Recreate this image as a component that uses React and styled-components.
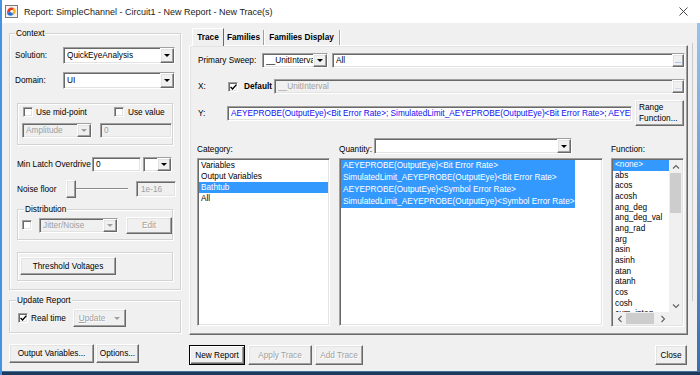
import React from "react";
import styled, { createGlobalStyle, css } from "styled-components";

const GlobalStyle = createGlobalStyle`
  html, body { margin: 0; padding: 0; background: #f0f0f0; }
  body {
    font-family: "Liberation Sans", Arial, sans-serif;
    font-size: 8.25px;
    color: #000;
  }
  * { box-sizing: border-box; }
`;

const sunken = css`
  border: 1px solid;
  border-color: #a0a0a0 #ffffff #ffffff #a0a0a0;
  box-shadow: inset 1px 1px 0 #696969, inset -1px -1px 0 #e3e3e3;
`;

const raised = css`
  border: 1px solid;
  border-color: #ffffff #696969 #696969 #ffffff;
  box-shadow: inset -1px -1px 0 #a0a0a0, inset 1px 1px 0 #e3e3e3;
`;

const Window = styled.div`
  width: 700px;
  height: 375px;
  overflow: hidden;
  display: flex;
  flex-direction: column;
  background: #f0f0f0;
  border-left: 2px solid #4393e2;
`;

const TitleBar = styled.div`
  flex: none;
  height: 23px;
  background: #fff;
  display: flex;
  align-items: center;
  padding-left: 3px;
`;

const Title = styled.span`
  margin-left: 6px;
  font-size: 9px;
  color: #1a1a1a;
  white-space: nowrap;
`;

const CloseIcon = styled.svg`
  margin-left: auto;
  margin-right: 12px;
`;

const Body = styled.div`
  flex: 1;
  display: flex;
  padding-left: 7px;
`;

const Edge = styled.div`
  flex: 1;
  display: flex;
  justify-content: space-between;
  padding-left: 4px;
`;

const EdgeLine = styled.div`
  width: 1px;
  margin: 20px 0 70px;
  background: #c8c8c8;
`;

const EdgeStrip = styled.div`
  width: 3px;
  background: linear-gradient(#9cc2ea, #3c6ea8);
`;

const Taskbar = styled.div`
  flex: none;
  height: 4px;
  background: #1d3a5c;
  border-top: 1px solid #46709c;
`;

const Col = styled.div`
  flex: none;
  display: flex;
  flex-direction: column;
  width: ${(p) => p.$w}px;
  margin-left: ${(p) => p.$ml || 0}px;
  padding-top: ${(p) => p.$pt || 0}px;
`;

const Group = styled.div`
  position: relative;
  flex: none;
  width: ${(p) => (p.$w ? p.$w + "px" : "auto")};
  margin-top: ${(p) => p.$mt || 0}px;
  margin-left: ${(p) => p.$ml || 0}px;
  padding: ${(p) => p.$pad || "0"};
  border: 1px solid #d3d3d3;
  box-shadow: inset 1px 1px 0 #fff, 1px 1px 0 #fff;
`;

const Legend = styled.span`
  position: absolute;
  top: -6px;
  left: ${(p) => p.$left || 5}px;
  padding: 0 1px;
  line-height: 11px;
  background: #f0f0f0;
  white-space: nowrap;
`;

const Row = styled.div`
  flex: none;
  display: flex;
  align-items: ${(p) => p.$align || "center"};
  height: ${(p) => p.$h}px;
  margin-top: ${(p) => p.$mt || 0}px;
  margin-left: ${(p) => p.$ml || 0}px;
  gap: ${(p) => p.$gap || 0}px;
`;

const Label = styled.span`
  flex: none;
  width: ${(p) => (p.$w ? p.$w + "px" : "auto")};
  margin-left: ${(p) => p.$ml || 0}px;
  white-space: nowrap;
  font-weight: ${(p) => (p.$bold ? 700 : 400)};
  color: ${(p) => (p.$disabled ? "#a0a0a0" : "#000")};
`;

const Field = styled.div`
  ${sunken};
  flex: none;
  display: flex;
  align-items: center;
  overflow: hidden;
  white-space: nowrap;
  width: ${(p) => p.$w}px;
  height: ${(p) => p.$h || 15}px;
  margin-left: ${(p) => p.$ml || 0}px;
  padding-left: ${(p) => p.$pl ?? 3}px;
  background: ${(p) => (p.$disabled ? "#f0f0f0" : "#fff")};
  color: ${(p) => (p.$disabled ? "#a0a0a0" : p.$color || "#000")};
`;

const FieldText = styled.span`
  flex: 1;
  min-width: 0;
  overflow: hidden;
`;

const DropBtn = styled.span`
  ${raised};
  flex: none;
  width: ${(p) => p.$w || 14}px;
  height: 100%;
  display: flex;
  align-items: center;
  justify-content: center;
  background: #f0f0f0;
  color: ${(p) => (p.$disabled ? "#a0a0a0" : "#3030c0")};
  font-size: 7px;
  line-height: 1;
`;

const Arrow = styled.span`
  width: 0;
  height: 0;
  border-left: 3px solid transparent;
  border-right: 3px solid transparent;
  border-top: 3px solid ${(p) => (p.$disabled ? "#a0a0a0" : "#000")};
`;

const CheckBox = styled.span`
  ${sunken};
  flex: none;
  width: 10px;
  height: 10px;
  background: #fff;
  display: flex;
  align-items: center;
  justify-content: center;
`;

const Button = styled.button`
  ${raised};
  flex: none;
  font: inherit;
  margin: 0;
  padding: 0;
  width: ${(p) => p.$w}px;
  height: ${(p) => p.$h || 19}px;
  margin-left: ${(p) => p.$ml || 0}px;
  margin-right: ${(p) => p.$mr || 0}px;
  background: #f0f0f0;
  color: ${(p) => (p.disabled ? "#a0a0a0" : "#000")};
  text-shadow: ${(p) => (p.disabled ? "1px 1px 0 #fff" : "none")};
  display: flex;
  align-items: center;
  justify-content: ${(p) => (p.$left ? "flex-start" : "center")};
  ${(p) =>
    p.$default &&
    css`
      border-color: #000;
      box-shadow: inset 1px 1px 0 #fff, inset -1px -1px 0 #696969,
        inset -2px -2px 0 #a0a0a0;
    `}
`;

const RangeText = styled.span`
  display: flex;
  flex-direction: column;
  align-items: flex-start;
  padding-left: 3px;
  line-height: 11px;
`;

const SplitArrow = styled.span`
  margin-left: 9px;
  width: 0;
  height: 0;
  border-left: 3px solid transparent;
  border-right: 3px solid transparent;
  border-top: 3px solid #a0a0a0;
`;

const Slider = styled.div`
  flex: none;
  width: 62px;
  height: 18px;
  display: flex;
  align-items: center;
`;

const Thumb = styled.span`
  ${raised};
  flex: none;
  width: 10px;
  height: 18px;
  background: #f0f0f0;
`;

const Track = styled.span`
  flex: 1;
  height: 2px;
  border-top: 1px solid #8a8a8a;
  border-bottom: 1px solid #fff;
`;

const Tabs = styled.div`
  flex: none;
  display: flex;
  align-items: flex-end;
  height: 17px;
  padding-left: 3px;
  margin-top: 5px;
  position: relative;
  z-index: 1;
`;

const Tab = styled.div`
  flex: none;
  width: ${(p) => p.$w}px;
  height: ${(p) => (p.$active ? 18 : 15)}px;
  display: flex;
  align-items: center;
  justify-content: center;
  font-weight: 700;
  white-space: nowrap;
  ${(p) =>
    p.$active
      ? css`
          border: 1px solid;
          border-color: #fff #696969 transparent #fff;
          border-bottom: none;
          background: #f0f0f0;
          margin-bottom: -1px;
        `
      : css`
          border-right: 1px solid #a0a0a0;
          box-shadow: 1px 0 0 #fff;
        `}
`;

const Panel = styled.div`
  ${raised};
  flex: none;
  height: 290px;
  padding: 7px 2px 0 8px;
  display: flex;
  flex-direction: column;
`;

const ListArea = styled.div`
  flex: none;
  display: flex;
  margin-top: 14px;
`;

const ListCol = styled.div`
  flex: none;
  display: flex;
  flex-direction: column;
  width: ${(p) => p.$w}px;
  margin-left: ${(p) => p.$ml || 0}px;
`;

const ListHead = styled.div`
  height: 15px;
  display: flex;
  align-items: flex-end;
  padding-bottom: 1px;
`;

const ListBox = styled.div`
  ${sunken};
  margin-top: 3px;
  background: #fff;
  height: ${(p) => p.$h}px;
  overflow: hidden;
  padding: 1px;
`;

const Item = styled.div`
  height: ${(p) => p.$rh}px;
  line-height: ${(p) => p.$rh}px;
  padding-left: ${(p) => p.$pl ?? 2}px;
  white-space: nowrap;
  width: ${(p) => (p.$hw ? p.$hw + "px" : "auto")};
  background: ${(p) => (p.$sel ? "#3399ff" : "transparent")};
  color: ${(p) => (p.$sel ? "#fff" : "#000")};
`;

const FnBox = styled.div`
  ${sunken};
  margin-top: 3px;
  background: #fff;
  height: 169px;
  overflow: hidden;
  display: grid;
  grid-template-columns: 1fr 13px;
  grid-template-rows: 1fr 13px;
  padding: 1px;
`;

const FnItems = styled.div`
  overflow: hidden;
`;

const VScroll = styled.div`
  background: #f0f0f0;
  display: flex;
  flex-direction: column;
  align-items: stretch;
`;

const HScroll = styled.div`
  background: #f0f0f0;
  display: flex;
  align-items: stretch;
`;

const Corner = styled.div`
  background: #f0f0f0;
`;

const ScrollBtn = styled.span`
  flex: none;
  display: flex;
  align-items: center;
  justify-content: center;
  width: ${(p) => (p.$h ? "13px" : "auto")};
  height: ${(p) => (p.$h ? "auto" : "13px")};
`;

const ScrollThumb = styled.span`
  flex: none;
  background: #cdcdcd;
  ${(p) =>
    p.$h
      ? css`
          width: 28px;
          margin: 1px 0;
        `
      : css`
          height: 40px;
          margin: 0 1px;
        `}
`;

const Spacer = styled.span`
  flex: 1;
`;

const BottomRow = styled.div`
  flex: none;
  display: flex;
  height: ${(p) => p.$h || 19}px;
  margin-top: ${(p) => p.$mt || 0}px;
  gap: ${(p) => p.$gap || 0}px;
`;

const Chevron = ({ dir }) => {
  const d = {
    up: "M1 4.5 L4 1.5 L7 4.5",
    down: "M1 1.5 L4 4.5 L7 1.5",
    left: "M4.5 1 L1.5 4 L4.5 7",
    right: "M1.5 1 L4.5 4 L1.5 7",
  }[dir];
  const vertical = dir === "up" || dir === "down";
  return (
    <svg
      width={vertical ? 8 : 6}
      height={vertical ? 6 : 8}
      viewBox={vertical ? "0 0 8 6" : "0 0 6 8"}
    >
      <path d={d} stroke="#606060" strokeWidth="1.1" fill="none" />
    </svg>
  );
};

const Tick = () => (
  <svg width="7" height="6" viewBox="0 0 7 6">
    <path d="M0.6 3 L2.6 5 L6.4 0.6" stroke="#000" strokeWidth="1.4" fill="none" />
  </svg>
);

const Combo = ({ w, h, disabled, children, ml }) => (
  <Field $w={w} $h={h} $disabled={disabled} $ml={ml}>
    <FieldText>{children}</FieldText>
    <DropBtn $disabled={disabled}>
      <Arrow $disabled={disabled} />
    </DropBtn>
  </Field>
);

const AppIcon = () => (
  <svg width="13" height="13" viewBox="0 0 13 13">
    <rect x="0.5" y="0.5" width="12" height="12" fill="#f3f3f3" stroke="#7a7a7a" />
    <path d="M2 8 C2 3 6 1.5 9 3 L7 6 Z" fill="#e63a1e" />
    <path d="M9 3 C12 5 11 9 8 10 L7 6 Z" fill="#f6b51c" />
    <path d="M8 10 C5 11.5 2.5 10.5 2 8 L7 6 Z" fill="#2b6fd6" />
    <circle cx="6.8" cy="6.3" r="1.4" fill="#fff" />
  </svg>
);

const functions = [
  "<none>",
  "abs",
  "acos",
  "acosh",
  "ang_deg",
  "ang_deg_val",
  "ang_rad",
  "arg",
  "asin",
  "asinh",
  "atan",
  "atanh",
  "cos",
  "cosh",
  "cum_integ",
];

const quantities = [
  "AEYEPROBE(OutputEye)<Bit Error Rate>",
  "SimulatedLimit_AEYEPROBE(OutputEye)<Bit Error Rate>",
  "AEYEPROBE(OutputEye)<Symbol Error Rate>",
  "SimulatedLimit_AEYEPROBE(OutputEye)<Symbol Error Rate>",
];

const categories = ["Variables", "Output Variables", "Bathtub", "All"];

export default function App() {
  return (
    <>
      <GlobalStyle />
      <Window>
        <TitleBar>
          <AppIcon />
          <Title>Report: SimpleChannel - Circuit1 - New Report - New Trace(s)</Title>
          <CloseIcon width="9" height="9" viewBox="0 0 9 9">
            <path d="M0.5 0.5 L8.5 8.5 M8.5 0.5 L0.5 8.5" stroke="#333" strokeWidth="0.9" />
          </CloseIcon>
        </TitleBar>

        <Body>
          <Col $w={172} $pt={10}>
            <Group $pad="0 5px 8px 5px">
              <Legend $left={5}>Context</Legend>
              <Row $h={17} $mt={13}>
                <Label $w={48}>Solution:</Label>
                <Combo w={112} h={17}>QuickEyeAnalysis</Combo>
              </Row>
              <Row $h={17} $mt={8}>
                <Label $w={48}>Domain:</Label>
                <Combo w={112} h={17}>UI</Combo>
              </Row>

              <Group $w={156} $mt={14} $ml={2} $pad="3px 0 6px 4px">
                <Row $h={10} $ml={1}>
                  <CheckBox />
                  <Label $ml={3} $w={78}>Use mid-point</Label>
                  <CheckBox />
                  <Label $ml={4}>Use value</Label>
                </Row>
                <Row $h={15} $mt={6} $gap={8}>
                  <Combo w={70} disabled>Amplitude</Combo>
                  <Field $w={72} $disabled>0</Field>
                </Row>
              </Group>

              <Row $h={15} $mt={12} $ml={2}>
                <Label $w={75}>Min Latch Overdrive</Label>
                <Field $w={49}>0</Field>
                <Field $w={29} $ml={2} $pl={0}>
                  <Spacer />
                  <DropBtn>
                    <Arrow />
                  </DropBtn>
                </Field>
              </Row>

              <Row $h={18} $mt={8} $ml={2}>
                <Label $w={49}>Noise floor</Label>
                <Slider>
                  <Thumb />
                  <Track />
                </Slider>
                <Field $w={40} $h={16} $ml={8} $pl={4} $disabled>
                  1e-16
                </Field>
              </Row>

              <Group $w={156} $mt={11} $ml={2} $pad="6px 0 5px 4px">
                <Legend $left={6}>Distribution</Legend>
                <Row $h={18}>
                  <CheckBox />
                  <Combo w={79} ml={7} disabled>
                    Jitter/Noise
                  </Combo>
                  <Button $w={46} $h={17} $ml={8} disabled>
                    Edit
                  </Button>
                </Row>
              </Group>

              <Group $w={156} $mt={12} $ml={2} $pad="4px 0 5px 2px">
                <Button $w={96} $h={18}>
                  Threshold Voltages
                </Button>
              </Group>
            </Group>

            <Group $mt={10} $pad="8px 0 5px 8px">
              <Legend $left={6}>Update Report</Legend>
              <Row $h={18}>
                <CheckBox>
                  <Tick />
                </CheckBox>
                <Label $ml={3} $w={42}>Real time</Label>
                <Button $w={53} $h={18} disabled>
                  <span style={{ textDecoration: "underline" }}>U</span>pdate
                  <SplitArrow />
                </Button>
              </Row>
            </Group>

            <BottomRow $mt={11} $gap={2}>
              <Button $w={85}>Output Variables...</Button>
              <Button $w={43}>Options...</Button>
            </BottomRow>
          </Col>

          <Col $w={499} $ml={8}>
            <Tabs>
              <Tab $w={32} $active>
                Trace
              </Tab>
              <Tab $w={40}>Families</Tab>
              <Tab $w={76}>Families Display</Tab>
            </Tabs>
            <Panel>
              <Row $h={15}>
                <Label $w={64}>Primary Sweep:</Label>
                <Combo w={66}>__UnitInterva</Combo>
                <Field $w={353} $ml={4}>
                  <FieldText>All</FieldText>
                  <DropBtn $w={12}>...</DropBtn>
                </Field>
              </Row>
              <Row $h={15} $mt={11}>
                <Label $w={30}>X:</Label>
                <CheckBox>
                  <Tick />
                </CheckBox>
                <Label $w={30} $ml={6} $bold>
                  Default
                </Label>
                <Field $w={411} $disabled>
                  <FieldText>__UnitInterval</FieldText>
                  <DropBtn $w={12} $disabled>
                    ...
                  </DropBtn>
                </Field>
              </Row>
              <Row $h={26} $mt={6}>
                <Label $w={29}>Y:</Label>
                <Field $w={405} $color="#1010f0">
                  <FieldText>
                    AEYEPROBE(OutputEye)&lt;Bit Error Rate&gt;; SimulatedLimit_AEYEPROBE(OutputEye)&lt;Bit
                    Error Rate&gt;; AEYEPROBE(OutputEye)&lt;Symbol Error Rate&gt;;
                  </FieldText>
                </Field>
                <Button $w={49} $h={26} $ml={3} $left>
                  <RangeText>
                    <span>Range</span>
                    <span>Function...</span>
                  </RangeText>
                </Button>
              </Row>

              <ListArea>
                <ListCol $w={133} $ml={-1}>
                  <ListHead>Category:</ListHead>
                  <ListBox $h={168}>
                    {categories.map((c) => (
                      <Item key={c} $rh={11} $sel={c === "Bathtub"}>
                        {c}
                      </Item>
                    ))}
                  </ListBox>
                </ListCol>

                <ListCol $w={264} $ml={9}>
                  <ListHead>
                    <Label $w={35}>Quantity:</Label>
                    <Combo w={198} h={16}></Combo>
                  </ListHead>
                  <ListBox $h={168}>
                    {quantities.map((q) => (
                      <Item key={q} $rh={12} $hw={234} $sel>
                        {q}
                      </Item>
                    ))}
                  </ListBox>
                </ListCol>

                <ListCol $w={73} $ml={8}>
                  <ListHead>Function:</ListHead>
                  <FnBox>
                    <FnItems>
                      {functions.map((f) => (
                        <Item key={f} $rh={10.67} $sel={f === "<none>"}>
                          {f}
                        </Item>
                      ))}
                    </FnItems>
                    <VScroll>
                      <ScrollBtn>
                        <Chevron dir="up" />
                      </ScrollBtn>
                      <ScrollThumb />
                      <Spacer />
                      <ScrollBtn>
                        <Chevron dir="down" />
                      </ScrollBtn>
                    </VScroll>
                    <HScroll>
                      <ScrollBtn $h>
                        <Chevron dir="left" />
                      </ScrollBtn>
                      <ScrollThumb $h />
                      <Spacer />
                      <ScrollBtn $h>
                        <Chevron dir="right" />
                      </ScrollBtn>
                    </HScroll>
                    <Corner />
                  </FnBox>
                </ListCol>
              </ListArea>
            </Panel>

            <BottomRow $mt={10} $h={20} $gap={3}>
              <Button $w={56} $h={20} $default>
                New Report
              </Button>
              <Button $w={64} $h={20} disabled>
                Apply Trace
              </Button>
              <Button $w={48} $h={20} disabled>
                Add Trace
              </Button>
              <Spacer />
              <Button $w={32} $h={20} $mr={1}>
                Close
              </Button>
            </BottomRow>
          </Col>

          <Edge>
            <EdgeLine />
            <EdgeStrip />
          </Edge>
        </Body>
        <Taskbar />
      </Window>
    </>
  );
}
